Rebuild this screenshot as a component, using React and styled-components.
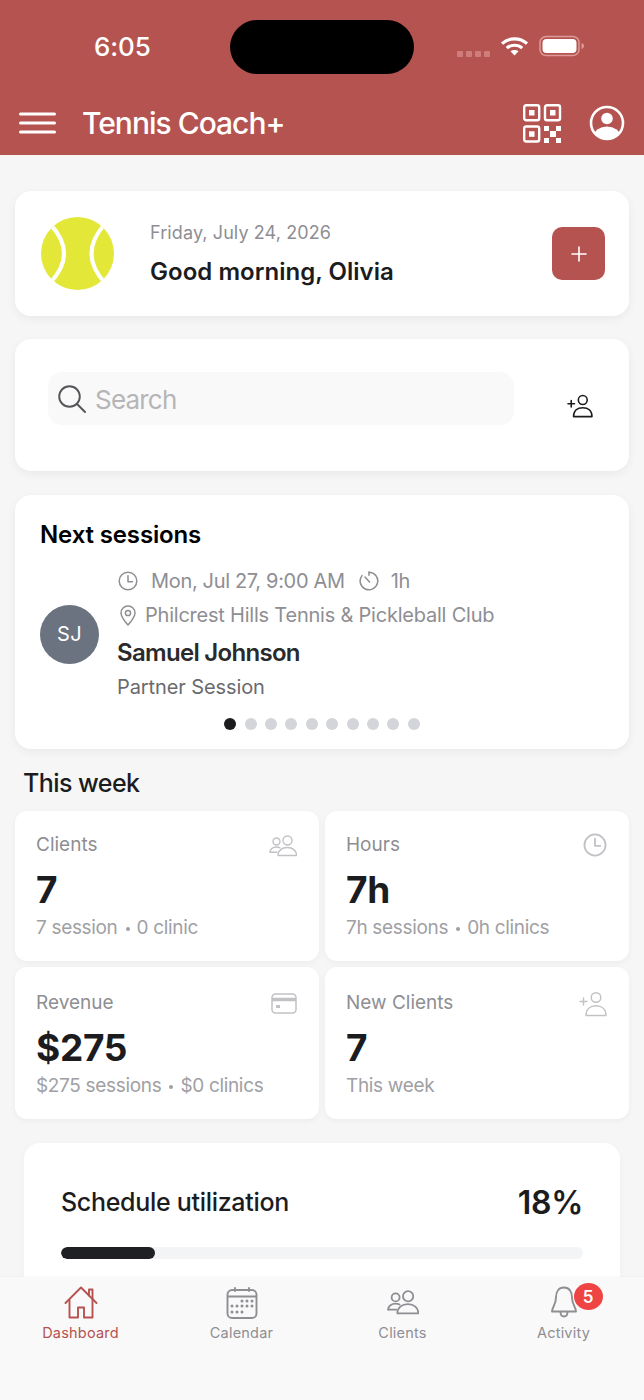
import React from "react";
import styled, { createGlobalStyle } from "styled-components";

const Global = createGlobalStyle`
  html, body { margin: 0; padding: 0; background: #f6f6f6; }
  * { box-sizing: border-box; }
  body { font-family: Inter, "Liberation Sans", sans-serif; }
`;
const Screen = styled.div`
  width: 644px; height: 1400px; display: flex; flex-direction: column; overflow: hidden; background: #f6f6f6;
`;
const Header = styled.header`
  height: 155px; flex: none; background: #b55350; color: #fff; display: flex; flex-direction: column;
`;
const StatusBar = styled.div`
  height: 94px; padding-top: 20px; display: flex; align-items: flex-start; position: relative;
`;
const Time = styled.div`
  width: 230px; padding: 12px 0 0 94px; font-size: 26px; line-height: 30px; font-weight: 500; letter-spacing: -0.1px; white-space: nowrap;
`;
const Island = styled.div`
  width: 184px; height: 54px; border-radius: 27px; background: #000; flex: none;
`;
const StatusIcons = styled.div`
  margin-left: 43px; padding-top: 15px; display: flex; align-items: flex-start;
`;
const SignalDots = styled.div`
  display: flex; gap: 3px; margin: 16px 10px 0 0;
  i { width: 6px; height: 6px; border-radius: 1px; background: #cf7d7a; display: block; }
`;
const NavBar = styled.div`
  flex: 1; display: flex; align-items: center; padding: 0 19px 3px 19px;
`;
const Title = styled.h1`
  margin: 0 0 0 26px; font-size: 30px; font-weight: 500; letter-spacing: -1px; line-height: 36px; flex: 1;
`;
const NavIcon = styled.span`
  display: flex; margin-left: ${p => p.$ml || 0}px;
`;
const Main = styled.main`
  flex: 1; min-height: 0; overflow: hidden; padding: 36px 15px 0; display: flex; flex-direction: column;
`;
const Card = styled.section`
  background: #fff; border-radius: 16px; box-shadow: 0 3px 10px rgba(0,0,0,.055); flex: none;
`;
const HeroCard = styled(Card)`
  height: 125px; display: flex; align-items: center; padding: 0 24px 0 26px;
`;
const HeroText = styled.div`
  margin-left: 36px; flex: 1; display: flex; flex-direction: column; gap: 11px;
`;
const DateText = styled.div`
  font-size: 18px; line-height: 26px; color: #8e8e93; letter-spacing: .1px;
`;
const Greeting = styled.div`
  font-size: 24px; line-height: 30px; font-weight: 600; color: #1c1c1e; letter-spacing: .03px;
`;
const AddButton = styled.button`
  width: 53px; height: 53px; border: 0; border-radius: 10px; background: #b55350; display: flex; align-items: center; justify-content: center; padding: 0;
`;
const SearchCard = styled(Card)`
  height: 132px; margin-top: 23px; display: flex; align-items: flex-start; padding: 33px 36px 0 33px;
`;
const SearchBox = styled.div`
  width: 466px; height: 53px; border-radius: 14px; background: #f9f9f9; display: flex; align-items: center; padding-left: 10px;
`;
const SearchText = styled.span`
  margin: 2px 0 0 9px; font-size: 26px; color: #b5b5b8; letter-spacing: -.8px; line-height: 32px;
`;
const AddClient = styled.span`
  margin: 22px 0 0 auto; display: flex;
`;
const SessionsCard = styled(Card)`
  height: 254px; margin-top: 24px; padding: 24px 25px 0;
`;
const CardTitle = styled.h2`
  margin: 0; font-size: 24px; line-height: 32px; font-weight: 600; color: #000; letter-spacing: -.14px;
`;
const SessionRow = styled.div`
  display: flex; align-items: center; margin-top: 13px;
`;
const Avatar = styled.div`
  width: 59px; height: 59px; border-radius: 50%; background: #6b7280; color: #fff; font-size: 20px; display: flex; align-items: center; justify-content: center; flex: none; letter-spacing: .4px; margin-top: 2px;
`;
const SessionBody = styled.div`
  margin-left: 18px; display: flex; flex-direction: column;
`;
const MetaRow = styled.div`
  height: 34px; display: flex; align-items: center; font-size: 20px; color: #8e8e93; letter-spacing: ${p => p.$ls}px; white-space: nowrap;
`;
const MetaIcon = styled.span`
  display: flex; margin: 0 ${p => p.$mr}px 0 ${p => p.$ml || 0}px;
`;
const ClientName = styled.div`
  height: 40px; display: flex; align-items: center; font-size: 24px; font-weight: 600; color: #2a2a2c; letter-spacing: -.7px;
`;
const SessionType = styled.div`
  height: 30px; display: flex; align-items: center; font-size: 20px; color: #6a6a6e; letter-spacing: -.1px;
`;
const Dots = styled.div`
  display: flex; justify-content: center; gap: 8.4px; margin-top: 16px;
`;
const Dot = styled.i`
  width: 12px; height: 12px; border-radius: 50%; background: ${p => p.$on ? "#1c1c1e" : "#d3d5da"};
`;
const SectionTitle = styled.h2`
  margin: 19px 0 13px 8px; font-size: 25px; line-height: 30px; font-weight: 500; color: #1c1c1e; letter-spacing: -.55px;
`;
const StatGrid = styled.div`
  display: grid; grid-template-columns: 304px 304px; gap: 6px; flex: none;
`;
const StatCard = styled(Card)`
  height: ${p => p.$h}px; padding: ${p => p.$top}px 21px 0; border-radius: 12px; box-shadow: 0 2px 6px rgba(0,0,0,.045);
`;
const StatHead = styled.div`
  display: flex; justify-content: space-between; align-items: flex-start; height: 28px;
`;
const StatLabel = styled.div`
  font-size: 19px; line-height: 26px; color: #8e8e93; letter-spacing: 0;
`;
const StatIcon = styled.span`
  display: flex; margin: ${p => p.$mt}px 1px 0 0;
`;
const StatValue = styled.div`
  font-size: 37px; line-height: 44px; font-weight: 700; color: #1c1c1e; margin-top: 8px; letter-spacing: -.3px;
`;
const StatSub = styled.div`
  font-size: 19px; line-height: 26px; color: #a0a0a4; margin-top: 3px; letter-spacing: -.33px; white-space: nowrap; display: flex; align-items: center;
`;
const Sep = styled.i`
  width: 4px; height: 4px; border-radius: 50%; background: #a0a0a4; margin: 2px 7px 0 8px; flex: none;
`;
const UtilCard = styled(Card)`
  margin: 24px 9px 0; height: 200px; padding: 37px 37px 0; box-shadow: 0 2px 8px rgba(0,0,0,.03);
`;
const UtilHead = styled.div`
  display: flex; justify-content: space-between; align-items: center; height: 44px;
`;
const UtilTitle = styled.div`
  font-size: 25px; font-weight: 500; color: #1c1c1e; letter-spacing: -.3px;
`;
const UtilValue = styled.div`
  font-size: 32px; font-weight: 600; color: #1c1c1e; letter-spacing: -.3px;
`;
const Track = styled.div`
  margin-top: 23px; height: 12px; border-radius: 6px; background: #f3f4f6; overflow: hidden;
`;
const Fill = styled.div`
  height: 100%; border-radius: 6px; background: #1f2023;
`;
const TabBar = styled.nav`
  height: 123px; flex: none; background: #f9f9f9; display: grid; grid-template-columns: repeat(4, 161px); box-shadow: 0 -1px 0 rgba(0,0,0,.015);
`;
const Tab = styled.div`
  display: flex; flex-direction: column; align-items: center; padding-top: 7px; color: ${p => p.$active ? "#b55350" : "#8e8e93"}; font-size: 14.5px; line-height: 20px; letter-spacing: .2px;
`;
const TabIcon = styled.div`
  height: 37px; display: flex; align-items: center; justify-content: center; margin-bottom: 2px; position: relative;
`;
const Badge = styled.span`
  position: absolute; left: 23px; top: -1px; width: 29px; height: 27px; border-radius: 50%; background: #ef4444; color: #fff; font-size: 17px; font-weight: 600; display: flex; align-items: center; justify-content: center; letter-spacing: 0;
`;

const Wifi = () => (
  <svg width="29" height="22" viewBox="0 0 29 22" fill="none" stroke="#fff" strokeWidth="3.2" strokeLinecap="butt">
    <path d="M2 8.6C9 2.3 20 2.3 27 8.6" />
    <path d="M6.8 13.1C11 9.3 18 9.3 22.2 13.1" />
    <path d="M14.5 20.5l-4-4.2c2.2-1.7 5.8-1.7 8 0z" fill="#fff" stroke="none" />
  </svg>
);
const Battery = () => (
  <svg width="47" height="22" viewBox="0 0 47 22" style={{ marginLeft: 10 }}>
    <rect x="1" y="1.5" width="39" height="19" rx="6" fill="none" stroke="#dd9a97" strokeWidth="1.5" />
    <rect x="3.5" y="4" width="34" height="14" rx="4" fill="#fff" />
    <path d="M42.5 8c1.6.4 2.5 1.6 2.5 3s-.9 2.6-2.5 3z" fill="#dd9a97" />
  </svg>
);
const Menu = () => (
  <svg width="37" height="22" viewBox="0 0 37 22" stroke="#fff" strokeWidth="3" strokeLinecap="round">
    <path d="M1.5 2h34M1.5 11h34M1.5 20h34" />
  </svg>
);
const Qr = () => (
  <svg width="39" height="39" viewBox="0 0 39 39" fill="none" stroke="#fff" strokeWidth="2.4">
    <rect x="1.2" y="1.2" width="15" height="15" rx="2" />
    <rect x="22" y="1.2" width="15" height="15" rx="2" />
    <rect x="1.2" y="22.5" width="15" height="15" rx="2" />
    <g fill="#fff" stroke="none">
      <rect x="6" y="6" width="5.5" height="5.5" />
      <rect x="27" y="6" width="5.5" height="5.5" />
      <rect x="6" y="27.3" width="5.5" height="5.5" />
      <rect x="21" y="22" width="5" height="5" />
      <rect x="33" y="22" width="5" height="5" />
      <rect x="27" y="27" width="6" height="6" />
      <rect x="21" y="34" width="5" height="5" />
      <rect x="33" y="34" width="5" height="5" />
    </g>
  </svg>
);
const Profile = () => (
  <svg width="36" height="36" viewBox="0 0 36 36">
    <defs><clipPath id="pc"><circle cx="18" cy="18" r="15.5" /></clipPath></defs>
    <circle cx="18" cy="18" r="16" fill="none" stroke="#fff" strokeWidth="2.6" />
    <circle cx="18" cy="13.5" r="5.8" fill="#fff" />
    <ellipse cx="18" cy="31" rx="13" ry="9.5" fill="#fff" clipPath="url(#pc)" />
  </svg>
);
const Ball = () => (
  <svg width="73" height="73" viewBox="0 0 73 73" style={{ flex: "none" }}>
    <defs><clipPath id="bc"><circle cx="36.5" cy="36.5" r="36.5" /></clipPath></defs>
    <circle cx="36.5" cy="36.5" r="36.5" fill="#e3e838" />
    <g clipPath="url(#bc)" fill="none" stroke="#fff" strokeWidth="4">
      <path d="M9 7Q37 36.500 9 66" />
      <path d="M64 7Q37 36.500 64 66" />
    </g>
  </svg>
);
const Search = () => (
  <svg width="28" height="28" viewBox="0 0 28 28" fill="none" stroke="#55555a" strokeWidth="1.900" strokeLinecap="round">
    <circle cx="11.500" cy="11.500" r="10.300" />
    <path d="M19 19l8 8" />
  </svg>
);
const UserPlus = ({ c = "#1c1c1e", w = 28, h = 26, sw = 1.7 }) => (
  <svg width={w} height={h} viewBox="0 0 28 26" fill="none" stroke={c} strokeWidth={sw} strokeLinecap="round" strokeLinejoin="round">
    <circle cx="17" cy="6.500" r="4.800" />
    <path d="M7 24.500c0-6.500 4.300-9.700 10-9.700s10 3.200 10 9.700z" />
    <path d="M1 10.500h7M4.500 7v7" />
  </svg>
);
const Clock = ({ s = 20, c = "#8e8e93", sw = 1.5 }) => (
  <svg width={s} height={s} viewBox="0 0 20 20" fill="none" stroke={c} strokeWidth={sw} strokeLinecap="round" strokeLinejoin="round">
    <circle cx="10" cy="10" r="8.800" />
    <path d="M10 4.800V10.700h4.500" />
  </svg>
);
const Timer = () => (
  <svg width="20" height="20" viewBox="0 0 20 20" fill="none" stroke="#8e8e93" strokeWidth="1.5" strokeLinecap="round">
    <path d="M10 1.200a8.800 8.800 0 1 1-7 3.400" />
    <path d="M6 6l4.500 5" />
    <path d="M10 1.200v3" />
  </svg>
);
const Pin = () => (
  <svg width="16" height="21" viewBox="0 0 16 21" fill="none" stroke="#8e8e93" strokeWidth="1.5">
    <path d="M8 20C4 15.500 1 11.600 1 8a7 7 0 0 1 14 0c0 3.600-3 7.500-7 12z" strokeLinejoin="round" />
    <circle cx="8" cy="8" r="2.600" />
  </svg>
);
const People = ({ w = 28, h = 22, c = "#c2c2c6", sw = 1.4 }) => (
  <svg width={w} height={h} viewBox="0 0 28 22" fill="none" stroke={c} strokeWidth={sw} strokeLinecap="round" strokeLinejoin="round">
    <circle cx="7.500" cy="6.500" r="3.500" />
    <circle cx="18.500" cy="5.500" r="4.500" />
    <path d="M1 17.200c0-3.200 3-5.200 6.500-5.200 1.300 0 2.500.3 3.500.8" />
    <path d="M1 17.200h7" />
    <path d="M9 20.500c0-5 4-8 9.300-8s9.200 3 9.200 8z" />
  </svg>
);
const CardIcon = () => (
  <svg width="26" height="21" viewBox="0 0 26 21" fill="none" stroke="#c2c2c6" strokeWidth="1.500">
    <rect x="1" y="1" width="24" height="19" rx="3.500" />
    <path d="M1 6.500h24" strokeWidth="3.500" />
    <rect x="5" y="12" width="4" height="3" fill="#c2c2c6" stroke="none" />
  </svg>
);
const Home = () => (
  <svg width="34" height="34" viewBox="0 0 34 34" fill="none" stroke="#b55350" strokeWidth="1.900" strokeLinecap="round" strokeLinejoin="round">
    <path d="M1.500 17L17 1.500 32.500 17" />
    <path d="M25 9.500V3.500h3.500v9.500" />
    <path d="M5.500 14v17.500h8.500V21.500h6v10h8.500V14" />
  </svg>
);
const Calendar = () => (
  <svg width="32" height="32" viewBox="0 0 32 32" fill="none" stroke="#8e8e93" strokeWidth="1.900" strokeLinecap="round">
    <rect x="1.500" y="3" width="29" height="28" rx="4.500" />
    <path d="M2 9.500h28M9 1v3M23 1v3" />
    <g fill="#8e8e93" stroke="none">
      {[[17,14],[22,14],[27,14],[7,19],[12,19],[17,19],[22,19],[27,19],[7,25],[12,25],[17,25]].map(([x,y]) => <circle key={x+"-"+y} cx={x-1} cy={y} r="1.500" />)}
    </g>
  </svg>
);
const Bell = () => (
  <svg width="26" height="33" viewBox="0 0 26 33" fill="none" stroke="#8e8e93" strokeWidth="1.900" strokeLinecap="round" strokeLinejoin="round">
    <path d="M13 1.500c-5.500 0-8 4.500-8 10 0 7-4 10-4 14h24c0-4-4-7-4-14 0-5.500-2.500-10-8-10z" />
    <path d="M9.500 26c0 6 7 6 7 0" />
  </svg>
);
const Plus = () => (
  <svg width="16" height="16" viewBox="0 0 16 16" stroke="#fff" strokeWidth="1.600" strokeLinecap="round"><path d="M8 1v14M1 8h14" /></svg>
);

export default function App() {
  return (
    <Screen>
      <Global />
      <Header>
        <StatusBar>
          <Time>6:05</Time>
          <Island />
          <StatusIcons>
            <SignalDots><i /><i /><i /><i /></SignalDots>
            <Wifi />
            <Battery />
          </StatusIcons>
        </StatusBar>
        <NavBar>
          <Menu />
          <Title>Tennis Coach+</Title>
          <NavIcon><Qr /></NavIcon>
          <NavIcon $ml={27}><Profile /></NavIcon>
        </NavBar>
      </Header>
      <Main>
        <HeroCard>
          <Ball />
          <HeroText>
            <DateText>Friday, July 24, 2026</DateText>
            <Greeting>Good morning, Olivia</Greeting>
          </HeroText>
          <AddButton aria-label="Add"><Plus /></AddButton>
        </HeroCard>
        <SearchCard>
          <SearchBox><Search /><SearchText>Search</SearchText></SearchBox>
          <AddClient><UserPlus w={26} h={24} /></AddClient>
        </SearchCard>
        <SessionsCard>
          <CardTitle>Next sessions</CardTitle>
          <SessionRow>
            <Avatar>SJ</Avatar>
            <SessionBody>
              <MetaRow $ls={-0.33}>
                <MetaIcon $ml={1} $mr={13}><Clock /></MetaIcon>Mon, Jul 27, 9:00 AM
                <MetaIcon $ml={14} $mr={12}><Timer /></MetaIcon>1h
              </MetaRow>
              <MetaRow $ls={-0.22}><MetaIcon $ml={3} $mr={9}><Pin /></MetaIcon>Philcrest Hills Tennis &amp; Pickleball Club</MetaRow>
              <ClientName>Samuel Johnson</ClientName>
              <SessionType>Partner Session</SessionType>
            </SessionBody>
          </SessionRow>
          <Dots>{Array.from({ length: 10 }, (_, i) => <Dot key={i} $on={i === 0} />)}</Dots>
        </SessionsCard>
        <SectionTitle>This week</SectionTitle>
        <StatGrid>
          <StatCard $h={150} $top={21}>
            <StatHead><StatLabel>Clients</StatLabel><StatIcon $mt={3}><People /></StatIcon></StatHead>
            <StatValue>7</StatValue>
            <StatSub>7 session<Sep />0 clinic</StatSub>
          </StatCard>
          <StatCard $h={150} $top={21}>
            <StatHead><StatLabel>Hours</StatLabel><StatIcon $mt={1}><Clock s={24} c="#c2c2c6" /></StatIcon></StatHead>
            <StatValue>7h</StatValue>
            <StatSub>7h sessions<Sep />0h clinics</StatSub>
          </StatCard>
          <StatCard $h={152} $top={23}>
            <StatHead><StatLabel>Revenue</StatLabel><StatIcon $mt={3}><CardIcon /></StatIcon></StatHead>
            <StatValue>$275</StatValue>
            <StatSub>$275 sessions<Sep />$0 clinics</StatSub>
          </StatCard>
          <StatCard $h={152} $top={23}>
            <StatHead><StatLabel>New Clients</StatLabel><StatIcon $mt={1}><UserPlus c="#c2c2c6" sw={1.4} /></StatIcon></StatHead>
            <StatValue>7</StatValue>
            <StatSub>This week</StatSub>
          </StatCard>
        </StatGrid>
        <UtilCard>
          <UtilHead><UtilTitle>Schedule utilization</UtilTitle><UtilValue>18%</UtilValue></UtilHead>
          <Track><Fill style={{ width: "18%" }} /></Track>
        </UtilCard>
      </Main>
      <TabBar>
        <Tab $active><TabIcon><Home /></TabIcon>Dashboard</Tab>
        <Tab><TabIcon><Calendar /></TabIcon>Calendar</Tab>
        <Tab><TabIcon><People w={32} h={25} c="#8e8e93" sw={1.6} /></TabIcon>Clients</Tab>
        <Tab><TabIcon><Bell /><Badge>5</Badge></TabIcon>Activity</Tab>
      </TabBar>
    </Screen>
  );
}
